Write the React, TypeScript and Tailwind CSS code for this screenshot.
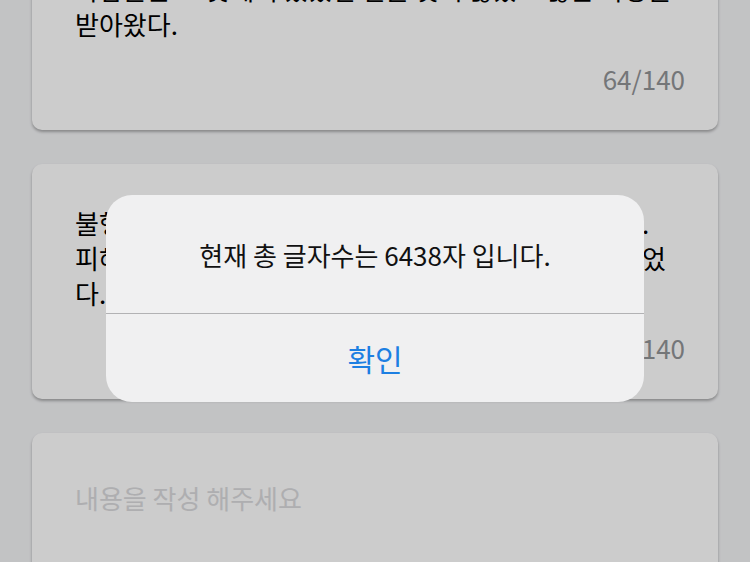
import React from 'react';

const font = { fontFamily: '"Noto Sans CJK KR", "Noto Sans", sans-serif' };

type Entry = { text: string; count: number };

const entries: Entry[] = [
    { text: '사람들은 그 곳에서 있었던 일을 잊지 않았고 많은 사랑을\n받아왔다.', count: 64 },
    { text: '불행하게도 그 사건은 사람들의 기억 속에서 잊혀 갔다.\n피해를 입은 가족들은 그날의 아픔 속에서 살아가고 있었\n다.', count: 59 },
];

function EntryCard({ entry }: { entry: Entry }) {
    return (
        <div className="bg-white rounded-[10px] shadow-[0_2px_3px_rgba(0,0,0,0.3)] pt-[41px] pb-[34px] px-[43px]">
            <p className="text-[26px] leading-[35px] text-black whitespace-pre">{entry.text}</p>
            <div className="mt-[20px] text-right text-[26px] leading-[35px] text-[#929497] -mr-[10px]">
                {entry.count}/140
            </div>
        </div>
    );
}

export default function App() {
    return (
        <div className="relative w-[750px] h-[562px] overflow-hidden bg-[#f3f4f6]" style={font}>
            <div className="flex flex-col gap-[34px] px-[32px] -mt-[70px]">
                {entries.map((e, i) => (
                    <EntryCard key={i} entry={e} />
                ))}
                <div className="bg-white rounded-[10px] shadow-[0_2px_3px_rgba(0,0,0,0.3)] pt-[47px] px-[43px] h-[220px]">
                    <p className="text-[26px] leading-[35px] text-[#dadadd]">내용을 작성 해주세요</p>
                </div>
            </div>

            {/* dim + alert */}
            <div className="absolute inset-0 bg-black/20">
                <div className="absolute left-[106px] top-[195px] w-[538px] rounded-[26px] bg-[#f0f0f1] overflow-hidden">
                    <div className="h-[118px] flex items-center justify-center text-[26px] text-[#111]">
                        현재 총 글자수는 6438자 입니다.
                    </div>
                    <div className="h-px bg-[#b2b2b4]" />
                    <button className="w-full h-[88px] flex items-center justify-center text-[30px] text-[#1d7fe2]">
                        확인
                    </button>
                </div>
            </div>
        </div>
    );
}
